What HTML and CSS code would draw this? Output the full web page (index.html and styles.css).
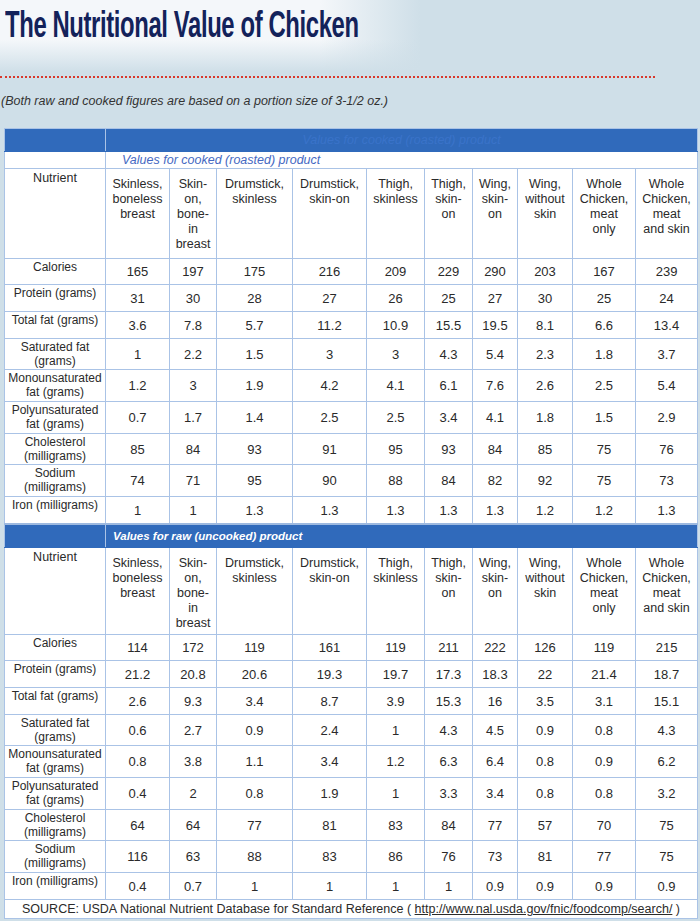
FILE: index.html
```html
<!DOCTYPE html>
<html>
<head>
<meta charset="utf-8">
<title>The Nutritional Value of Chicken</title>
<link rel="stylesheet" href="styles.css">
</head>
<body>
<div class="page">
  <header class="hero">
    <h1 class="title"><span class="title-text">The Nutritional Value of Chicken</span></h1>
  </header>
  <div class="rule"></div>
  <p class="note">(Both raw and cooked figures are based on a portion size of 3-1/2 oz.)</p>
  <table class="nut">
    <colgroup>
      <col class="c-lab"><col class="c1"><col class="c2"><col class="c3"><col class="c4"><col class="c5"><col class="c6"><col class="c7"><col class="c8"><col class="c9"><col class="c10">
    </colgroup>
    <tbody>
      <tr class="band">
        <td></td>
        <td colspan="10" class="ghost">Values for cooked (roasted) product</td>
      </tr>
      <tr class="sub">
        <td></td>
        <td colspan="10" class="subtxt">Values for cooked (roasted) product</td>
      </tr>
      <tr class="head head-a">
        <td class="lab-h">Nutrient</td>
        <td>Skinless,<br>boneless<br>breast</td>
        <td>Skin-<br>on,<br>bone-<br>in<br>breast</td>
        <td>Drumstick,<br>skinless</td>
        <td>Drumstick,<br>skin-on</td>
        <td>Thigh,<br>skinless</td>
        <td>Thigh,<br>skin-<br>on</td>
        <td>Wing,<br>skin-<br>on</td>
        <td>Wing,<br>without<br>skin</td>
        <td>Whole<br>Chicken,<br>meat<br>only</td>
        <td>Whole<br>Chicken,<br>meat<br>and skin</td>
      </tr>
      <tr class="r1"><td class="lab">Calories</td><td>165</td><td>197</td><td>175</td><td>216</td><td>209</td><td>229</td><td>290</td><td>203</td><td>167</td><td>239</td></tr>
      <tr class="r2"><td class="lab">Protein (grams)</td><td>31</td><td>30</td><td>28</td><td>27</td><td>26</td><td>25</td><td>27</td><td>30</td><td>25</td><td>24</td></tr>
      <tr class="r3"><td class="lab">Total fat (grams)</td><td>3.6</td><td>7.8</td><td>5.7</td><td>11.2</td><td>10.9</td><td>15.5</td><td>19.5</td><td>8.1</td><td>6.6</td><td>13.4</td></tr>
      <tr class="r4"><td class="lab">Saturated fat<br>(grams)</td><td>1</td><td>2.2</td><td>1.5</td><td>3</td><td>3</td><td>4.3</td><td>5.4</td><td>2.3</td><td>1.8</td><td>3.7</td></tr>
      <tr class="r5"><td class="lab">Monounsaturated<br>fat (grams)</td><td>1.2</td><td>3</td><td>1.9</td><td>4.2</td><td>4.1</td><td>6.1</td><td>7.6</td><td>2.6</td><td>2.5</td><td>5.4</td></tr>
      <tr class="r6"><td class="lab">Polyunsaturated<br>fat (grams)</td><td>0.7</td><td>1.7</td><td>1.4</td><td>2.5</td><td>2.5</td><td>3.4</td><td>4.1</td><td>1.8</td><td>1.5</td><td>2.9</td></tr>
      <tr class="r7"><td class="lab">Cholesterol<br>(milligrams)</td><td>85</td><td>84</td><td>93</td><td>91</td><td>95</td><td>93</td><td>84</td><td>85</td><td>75</td><td>76</td></tr>
      <tr class="r8"><td class="lab">Sodium<br>(milligrams)</td><td>74</td><td>71</td><td>95</td><td>90</td><td>88</td><td>84</td><td>82</td><td>92</td><td>75</td><td>73</td></tr>
      <tr class="r9"><td class="lab">Iron (milligrams)</td><td>1</td><td>1</td><td>1.3</td><td>1.3</td><td>1.3</td><td>1.3</td><td>1.3</td><td>1.2</td><td>1.2</td><td>1.3</td></tr>

      <tr class="band band-raw">
        <td></td>
        <td colspan="10" class="rawtxt">Values for raw (uncooked) product</td>
      </tr>
      <tr class="head head-b">
        <td class="lab-h">Nutrient</td>
        <td>Skinless,<br>boneless<br>breast</td>
        <td>Skin-<br>on,<br>bone-<br>in<br>breast</td>
        <td>Drumstick,<br>skinless</td>
        <td>Drumstick,<br>skin-on</td>
        <td>Thigh,<br>skinless</td>
        <td>Thigh,<br>skin-<br>on</td>
        <td>Wing,<br>skin-<br>on</td>
        <td>Wing,<br>without<br>skin</td>
        <td>Whole<br>Chicken,<br>meat<br>only</td>
        <td>Whole<br>Chicken,<br>meat<br>and skin</td>
      </tr>
      <tr class="r1"><td class="lab">Calories</td><td>114</td><td>172</td><td>119</td><td>161</td><td>119</td><td>211</td><td>222</td><td>126</td><td>119</td><td>215</td></tr>
      <tr class="r2"><td class="lab">Protein (grams)</td><td>21.2</td><td>20.8</td><td>20.6</td><td>19.3</td><td>19.7</td><td>17.3</td><td>18.3</td><td>22</td><td>21.4</td><td>18.7</td></tr>
      <tr class="r3"><td class="lab">Total fat (grams)</td><td>2.6</td><td>9.3</td><td>3.4</td><td>8.7</td><td>3.9</td><td>15.3</td><td>16</td><td>3.5</td><td>3.1</td><td>15.1</td></tr>
      <tr class="r4"><td class="lab">Saturated fat<br>(grams)</td><td>0.6</td><td>2.7</td><td>0.9</td><td>2.4</td><td>1</td><td>4.3</td><td>4.5</td><td>0.9</td><td>0.8</td><td>4.3</td></tr>
      <tr class="r5"><td class="lab">Monounsaturated<br>fat (grams)</td><td>0.8</td><td>3.8</td><td>1.1</td><td>3.4</td><td>1.2</td><td>6.3</td><td>6.4</td><td>0.8</td><td>0.9</td><td>6.2</td></tr>
      <tr class="r6"><td class="lab">Polyunsaturated<br>fat (grams)</td><td>0.4</td><td>2</td><td>0.8</td><td>1.9</td><td>1</td><td>3.3</td><td>3.4</td><td>0.8</td><td>0.8</td><td>3.2</td></tr>
      <tr class="r7"><td class="lab">Cholesterol<br>(milligrams)</td><td>64</td><td>64</td><td>77</td><td>81</td><td>83</td><td>84</td><td>77</td><td>57</td><td>70</td><td>75</td></tr>
      <tr class="r8"><td class="lab">Sodium<br>(milligrams)</td><td>116</td><td>63</td><td>88</td><td>83</td><td>86</td><td>76</td><td>73</td><td>81</td><td>77</td><td>75</td></tr>
      <tr class="r9"><td class="lab">Iron (milligrams)</td><td>0.4</td><td>0.7</td><td>1</td><td>1</td><td>1</td><td>1</td><td>0.9</td><td>0.9</td><td>0.9</td><td>0.9</td></tr>
      <tr class="src">
        <td colspan="11">SOURCE: USDA National Nutrient Database for Standard Reference ( <a class="src-link" href="#">http://www.nal.usda.gov/fnic/foodcomp/search/</a> )</td>
      </tr>
    </tbody>
  </table>
</div>
</body>
</html>
```

FILE: styles.css
```css
html, body {
  margin: 0;
  padding: 0;
}
body {
  background: #cfdfe8;
  font-family: "Liberation Sans", Arial, sans-serif;
  color: #2a2a2a;
}
.page {
  width: 700px;
  height: 921px;
  overflow: hidden;
  background:
    linear-gradient(to bottom, rgba(207,223,232,0) 40px, #cfdfe8 72px),
    linear-gradient(to right, #f4f7fa 0, #f4f7fa 320px, #cfdfe8 420px);
  background-repeat: no-repeat;
  background-size: 700px 80px, 700px 80px;
}
.hero {
  height: 76px;
  padding-left: 5px;
  box-sizing: border-box;
  padding-top: 5px;
}
.title {
  margin: 0;
  font-family: "Liberation Sans", Arial, sans-serif;
  font-weight: bold;
  font-size: 37px;
  line-height: 40px;
  color: #13225a;
  white-space: nowrap;
}
.title-text {
  display: inline-block;
  transform: scaleX(0.645);
  transform-origin: 0 0;
  letter-spacing: -0.6px;
}
.rule {
  width: 655px;
  height: 0;
  border-top: 2px dotted #d8382c;
}
.note {
  margin: 16px 0 0 0;
  padding-left: 1px;
  font-size: 12.5px;
  line-height: 14px;
  height: 34px;
  font-style: italic;
  color: #333;
  white-space: nowrap;
}
.nut {
  margin-left: 4px;
  width: 693px;
  border-collapse: collapse;
  table-layout: fixed;
  background: #fff;
  border: 1px solid #9db9e0;
}
.c-lab { width: 101px; }
.c1 { width: 64px; }
.c2 { width: 47px; }
.c3 { width: 76px; }
.c4 { width: 74px; }
.c5 { width: 58px; }
.c6 { width: 48px; }
.c7 { width: 45px; }
.c8 { width: 55px; }
.c9 { width: 63px; }
.c10 { width: 62px; }

.nut td {
  border: 1px solid #aac3e6;
  padding: 0;
  text-align: center;
  vertical-align: middle;
  font-size: 13px;
  line-height: 15px;
  color: #2a2a2a;
  white-space: nowrap;
  overflow: hidden;
}
.nut .band td {
  background: #306abb;
  height: 22px;
  border-color: #aac3e6 #aac3e6 #306abb #aac3e6;
}
.nut .band-raw td {
  border-top: 2px solid #9db9e0;
}
.nut td.ghost {
  color: #3a73c9;
  font-style: italic;
  font-size: 12.5px;
}
.nut .sub td {
  height: 16px;
  background: #fff;
}
.nut td.subtxt {
  text-align: left;
  padding-left: 16px;
  font-style: italic;
  font-size: 12.5px;
  line-height: 14px;
  color: #4569c2;
}
.nut td.rawtxt {
  text-align: left;
  padding-left: 7px;
  font-style: italic;
  font-weight: bold;
  font-size: 11.5px;
  color: #fff;
}
.nut .head td {
  vertical-align: top;
  padding-top: 8px;
  font-size: 12.5px;
  line-height: 15px;
}
.nut .head-a td { height: 81px; }
.nut .head-b td { height: 78px; }
.nut .head td.lab-h {
  padding-top: 2px;
}
.nut td.lab {
  vertical-align: top;
  font-size: 12px;
  line-height: 14px;
  padding-top: 1px;
}
.nut .r1 td { height: 24px; }
.nut .r2 td { height: 25px; }
.nut .r3 td { height: 25px; }
.nut .r4 td { height: 29px; }
.nut .r5 td { height: 30px; }
.nut .r6 td { height: 30px; }
.nut .r7 td { height: 29px; }
.nut .r8 td { height: 30px; }
.nut .r9 td { height: 25px; }
.nut .src td {
  height: 18px;
  font-size: 12.5px;
  line-height: 14px;
}
.src-link {
  color: #2a2a2a;
  text-decoration: underline;
}
```
